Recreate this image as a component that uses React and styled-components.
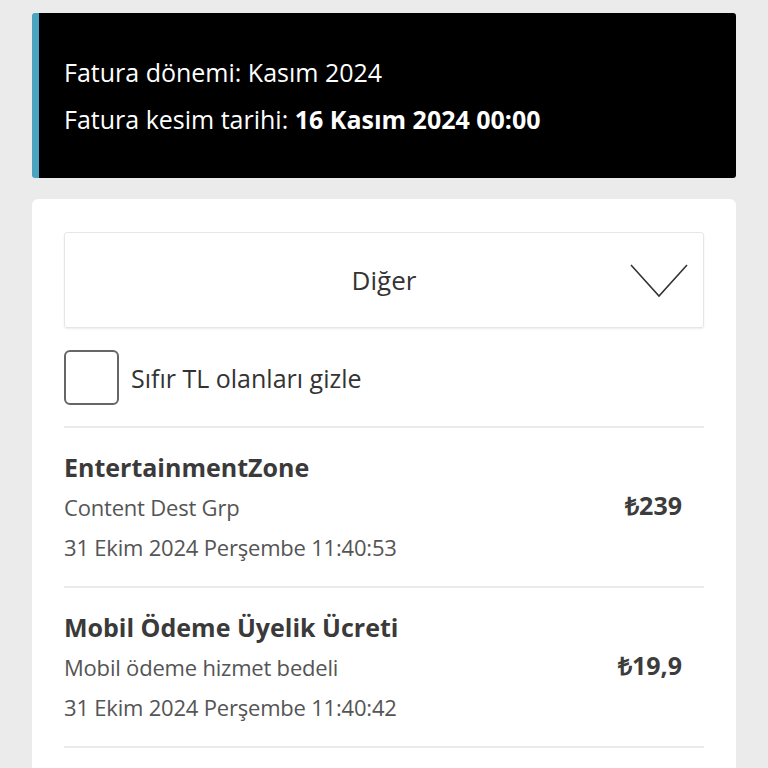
import React from 'react';
import styled, { createGlobalStyle } from 'styled-components';

const GlobalStyle = createGlobalStyle`
  body {
    margin: 0;
    background: #ebebeb;
    font-family: "Open Sans", "Liberation Sans", sans-serif;
    color: #333;
  }
`;

const Page = styled.div`
  padding: 13px 32px 0;
  display: flex;
  flex-direction: column;
  gap: 21px;
`;

const Banner = styled.div`
  background: #000;
  color: #fff;
  border-radius: 3px;
  border-left: 7px solid #4aa3c0;
  padding: 45px 25px 45px;
  display: flex;
  flex-direction: column;
  gap: 19px;
  font-size: 25px;
  line-height: 28px;
`;

const Card = styled.div`
  background: #fff;
  border-radius: 6px 6px 0 0;
  padding: 33px 32px 0;
  min-height: 536px;
`;

const Select = styled.div`
  height: 94px;
  border: 1px solid #e6e6e6;
  border-radius: 3px;
  box-shadow: 0 1px 2px rgba(0, 0, 0, 0.08);
  display: flex;
  align-items: center;
  justify-content: center;
  position: relative;
  font-size: 26px;
  color: #333;
`;

const Chevron = styled.svg`
  position: absolute;
  right: 15px;
  top: 31px;
`;

const CheckRow = styled.label`
  display: flex;
  align-items: center;
  gap: 12px;
  padding: 22px 0 21px;
  font-size: 25px;
  border-bottom: 2px solid #ebebeb;
`;

const Box = styled.span`
  width: 51px;
  height: 51px;
  border: 2px solid #666;
  border-radius: 6px;
`;

const Item = styled.div`
  display: flex;
  align-items: center;
  justify-content: space-between;
  padding: 24px 22px 24px 0;
  border-bottom: 2px solid #ebebeb;
`;

const Info = styled.div`
  display: flex;
  flex-direction: column;
  gap: 11px;
`;

const Title = styled.div`
  font-size: 25px;
  font-weight: 700;
  color: #3a3a3a;
  line-height: 30px;
`;

const Sub = styled.div`
  font-size: 22px;
  color: #555;
  line-height: 29px;
  letter-spacing: -0.2px;
`;

const Price = styled.div`
  font-size: 25px;
  font-weight: 700;
  color: #3c3c3c;
  margin-top: -4px;
`;

const items = [
  { title: 'EntertainmentZone', sub: 'Content Dest Grp', date: '31 Ekim 2024 Perşembe 11:40:53', price: '₺239' },
  { title: 'Mobil Ödeme Üyelik Ücreti', sub: 'Mobil ödeme hizmet bedeli', date: '31 Ekim 2024 Perşembe 11:40:42', price: '₺19,9' },
];

export default function App() {
  return (
    <>
      <GlobalStyle />
      <Page>
        <Banner>
          <div>Fatura dönemi: Kasım 2024</div>
          <div>Fatura kesim tarihi: <b>16 Kasım 2024 00:00</b></div>
        </Banner>
        <Card>
          <Select>
            Diğer
            <Chevron width="58" height="34" viewBox="0 0 58 34">
              <path d="M1 1 L29 32 L57 1" fill="none" stroke="#333" strokeWidth="1.6" />
            </Chevron>
          </Select>
          <CheckRow>
            <Box />
            Sıfır TL olanları gizle
          </CheckRow>
          {items.map((it) => (
            <Item key={it.title}>
              <Info>
                <Title>{it.title}</Title>
                <Sub>{it.sub}</Sub>
                <Sub>{it.date}</Sub>
              </Info>
              <Price>{it.price}</Price>
            </Item>
          ))}
        </Card>
      </Page>
    </>
  );
}
